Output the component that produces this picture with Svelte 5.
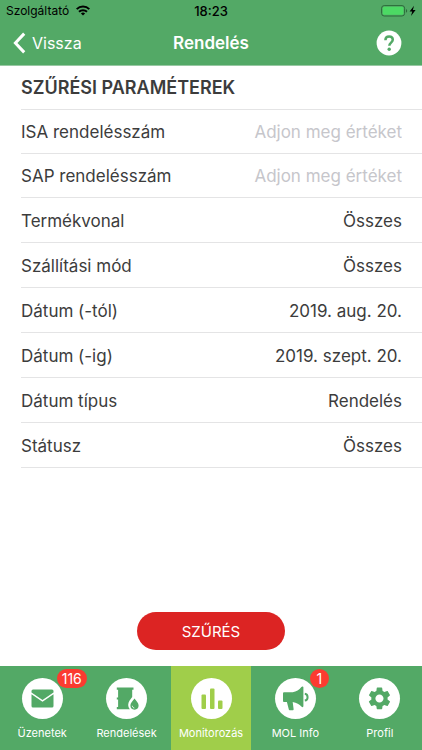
<script>
  const textFields = $state([
    { id: 'isa', label: 'ISA rendelésszám', value: '' },
    { id: 'sap', label: 'SAP rendelésszám', value: '' }
  ]);

  const choices = [
    { id: 'line', label: 'Termékvonal', value: 'Összes', kind: 'select' },
    { id: 'mode', label: 'Szállítási mód', value: 'Összes', kind: 'select' },
    { id: 'from', label: 'Dátum (-tól)', value: '2019. aug. 20.', kind: 'date' },
    { id: 'to', label: 'Dátum (-ig)', value: '2019. szept. 20.', kind: 'date' },
    { id: 'type', label: 'Dátum típus', value: 'Rendelés', kind: 'select' },
    { id: 'status', label: 'Státusz', value: 'Összes', kind: 'select' }
  ];

  const tabs = [
    { icon: 'mail', label: 'Üzenetek', badge: 116 },
    { icon: 'barrel', label: 'Rendelések' },
    { icon: 'chart', label: 'Monitorozás', active: true },
    { icon: 'horn', label: 'MOL Info', badge: 1 },
    { icon: 'gear', label: 'Profil' }
  ];
</script>

<div class="screen">
  <header>
    <div class="status">
      <div class="carrier">
        <span>Szolgáltató</span>
        <svg width="14" height="11" viewBox="0 0 14 11" aria-hidden="true">
          <g fill="none" stroke="#000" stroke-width="2">
            <path d="M.7 4.1a9 9 0 0 1 12.6 0" />
            <path d="M3 6.8a5.7 5.7 0 0 1 8 0" />
          </g>
          <path d="M7 10.6 4.9 8.5a3 3 0 0 1 4.2 0z" />
        </svg>
      </div>
      <span class="clock">18:23</span>
      <div class="power">
        <svg width="36" height="12" viewBox="0 0 36 12" aria-hidden="true">
          <rect x=".6" y=".6" width="23" height="10.4" rx="2.6" fill="none" stroke="#2c6a3b" />
          <rect x="1.8" y="1.8" width="20.6" height="8" rx="1.4" fill="#4cd964" />
          <path d="M25 4c1.6.6 1.6 3.2 0 3.8z" fill="#2c6a3b" />
          <path d="M33 .8 28.6 6.6h2.6l-1.2 4.4 4.6-6h-2.7z" />
        </svg>
      </div>
    </div>
    <nav class="bar">
      <a class="back" href="#back">
        <svg width="13" height="22" viewBox="0 0 13 22" aria-hidden="true">
          <path d="M11.2 1.6 2.4 11l8.800 9.400" fill="none" stroke="#fff" stroke-width="3" />
        </svg>
        Vissza
      </a>
      <h1>Rendelés</h1>
      <button class="help" type="button" aria-label="Súgó">
        <svg width="26" height="26" viewBox="0 0 26 26" aria-hidden="true">
          <circle cx="13" cy="13" r="12.4" fill="#fff" />
          <path d="M9.4 10.2c0-2.3 1.5-3.7 3.700-3.700s3.700 1.400 3.700 3.300c0 2.700-3.500 2.900-3.500 5.900" fill="none" stroke="#53a966" stroke-width="2.5" />
          <circle cx="13.2" cy="19.200" r="1.700" fill="#53a966" />
        </svg>
      </button>
    </nav>
  </header>

  <main>
    <form class="list" onsubmit={(e) => e.preventDefault()}>
      <h2>SZŰRÉSI PARAMÉTEREK</h2>
      {#each textFields as field (field.id)}
        <div class="row text">
          <label for={field.id}>{field.label}</label>
          <input id={field.id} type="text" placeholder="Adjon meg értéket" bind:value={field.value} />
        </div>
      {/each}
      {#each choices as field (field.id)}
        <div class="row">
          <label for={field.id}>{field.label}</label>
          {#if field.kind === 'select'}
            <select id={field.id}><option>{field.value}</option></select>
          {:else}
            <button class="date" id={field.id} type="button">{field.value}</button>
          {/if}
        </div>
      {/each}
      <button class="submit" type="submit">SZŰRÉS</button>
    </form>
  </main>

  <nav class="tabs">
    {#each tabs as tab (tab.label)}
      <a href="#{tab.icon}" class:active={tab.active} aria-current={tab.active ? 'page' : undefined}>
        <span class="disc">
          <svg width="41" height="41" viewBox="0 0 41 41" aria-hidden="true">
            {#if tab.icon === 'mail'}
              <path d="M11 11.500h19a1.500 1.500 0 0 1 1.500 1.500v1.500L20.500 22 9.500 14.500V13a1.500 1.500 0 0 1 1.500-1.500z" />
              <path d="M9.500 16.300l11 7.500 11-7.500V28a1.500 1.500 0 0 1-1.500 1.500H11A1.500 1.500 0 0 1 9.500 28z" />
            {:else if tab.icon === 'barrel'}
              <path d="M10.800 9.600h16.700v2.200h-1.300v7.200c-2 2.600-4 5-4 7.800 0 1.700.6 3.200 1.700 4.400H10.800V29h1.300v-7.400h-1.300v-2.200h1.300v-7.600h-1.300z" />
              <path d="M28.500 20.600c2.200 2.800 4.100 4.600 4.100 7a4.100 4.100 0 0 1-8.200 0c0-2.400 1.900-4.200 4.100-7z" />
              <path d="M26.300 27.800c.1 1.200.9 2 2 2.200" fill="none" stroke="#fff" />
            {:else if tab.icon === 'chart'}
              <rect x="10.500" y="16.500" width="4.500" height="14.500" rx="1" />
              <rect x="19" y="10.500" width="4.500" height="20.500" rx="1" />
              <rect x="27" y="22.500" width="4.500" height="8.500" rx="1" />
            {:else if tab.icon === 'horn'}
              <path d="M9.500 14.300h8.200c3.700-.6 6.500-2.400 8.700-5.200.8-1.100 2-.8 2 .4v18.600c0 1.200-1.100 1.700-2 .5-2-2.400-4.700-4.100-8.700-4.700l.9 7c.1 1-.3 1.400-1.100 1.400h-2.300c-.9 0-1.300-.4-1.500-1.400l-1.800-7h-2.400c-1.200 0-1.500-.4-1.500-1.500v-6.600c0-1.100.4-1.500 1.500-1.500z" />
              <path d="M29.800 15.800c3.700.5 3.700 6.200 0 6.800" fill="none" stroke="#53a966" stroke-width="2" />
            {:else}
              <path transform="translate(6.900 6.900) scale(1.130)" d="M19.140 12.940c.04-.3.06-.61.06-.94 0-.32-.02-.64-.07-.94l2.030-1.580c.18-.14.23-.41.12-.61l-1.920-3.320c-.12-.22-.37-.29-.59-.22l-2.390.96c-.5-.38-1.030-.7-1.620-.94l-.36-2.540c-.04-.24-.24-.41-.48-.41h-3.840c-.24 0-.43.17-.47.41l-.36 2.540c-.59.24-1.130.57-1.620.94l-2.390-.96c-.22-.08-.47 0-.59.22L2.740 8.870c-.12.21-.08.47.12.61l2.030 1.580c-.05.3-.09.63-.09.94s.02.64.07.94l-2.030 1.580c-.18.14-.23.41-.12.61l1.920 3.320c.12.22.37.29.59.22l2.390-.96c.5.38 1.030.7 1.620.94l.36 2.540c.05.24.24.41.48.41h3.840c.24 0 .44-.17.47-.41l.36-2.540c.59-.24 1.130-.56 1.620-.94l2.390.96c.22.08.47 0 .59-.22l1.920-3.320c.12-.22.07-.47-.12-.61l-2.010-1.580zM12 15.600c-1.980 0-3.600-1.620-3.600-3.600s1.620-3.600 3.600-3.600 3.600 1.620 3.600 3.600-1.620 3.600-3.600 3.600z" />
            {/if}
          </svg>
          {#if tab.badge}<span class="badge">{tab.badge}</span>{/if}
        </span>
        <span>{tab.label}</span>
      </a>
    {/each}
  </nav>
</div>

<style>
  :global(body) {
    margin: 0;
    background: #fff;
  }
  .screen {
    display: flex;
    flex-direction: column;
    min-height: 100vh;
    font-family: Inter, "Liberation Sans", sans-serif;
    color: #3c3c3c;
  }
  header {
    background: #53a966;
    border-bottom: 1px solid #98c8a3;
  }
  .status,
  .bar {
    display: grid;
    grid-template-columns: 1fr auto 1fr;
    align-items: center;
  }
  .status {
    height: 21px;
    padding: 0 5px;
    font-size: 12px;
    color: #000;
  }
  .carrier {
    display: flex;
    align-items: center;
    gap: 7px;
    padding-left: 1px;
  }
  .clock {
    font-size: 13px;
    font-weight: 500;
  }
  .power {
    display: flex;
    justify-content: flex-end;
  }
  .bar {
    height: 44px;
    padding: 0 13px;
    color: #fff;
  }
  .back {
    display: flex;
    align-items: center;
    gap: 6px;
    color: #fff;
    font-size: 16px;
    text-decoration: none;
  }
  h1 {
    margin: 0;
    font-size: 17px;
    font-weight: 600;
  }
  button {
    border: 0;
    padding: 0;
    background: none;
    font: inherit;
    color: inherit;
  }
  .help {
    display: flex;
    justify-self: end;
    margin-right: 7px;
  }
  main {
    flex: 1;
    display: flex;
  }
  .list {
    flex: 1;
    min-width: 0;
    display: flex;
    flex-direction: column;
  }
  h2,
  .row {
    box-sizing: border-box;
    height: 45px;
    margin: 0 0 0 21px;
    padding: 1px 20px 0 0;
    border-bottom: 1px solid #e4e4e5;
    font-size: 17px;
  }
  h2 {
    height: 44px;
    font-size: 18px;
    line-height: 42px;
    font-weight: 600;
    white-space: nowrap;
  }
  .row {
    display: flex;
    align-items: center;
    gap: 12px;
  }
  .row.text {
    height: 44px;
  }
  input,
  select,
  .date {
    flex: 1;
    min-width: 0;
    padding: 0;
    border: 0;
    background: none;
    appearance: none;
    font: inherit;
    color: inherit;
    text-align: right;
    text-align-last: right;
  }
  input::placeholder {
    color: #c6c6cb;
    opacity: 1;
  }
  .submit {
    align-self: center;
    width: 148px;
    height: 38px;
    margin: auto 0 16px;
    border-radius: 19px;
    background: #dc2423;
    color: #fff;
    font-size: 15px;
  }
  .tabs {
    display: flex;
    height: 84px;
    background: #53a966;
  }
  .tabs a {
    flex: 1;
    display: flex;
    flex-direction: column;
    align-items: center;
    gap: 7px;
    margin: 0 2px;
    padding-top: 12px;
    color: #fff;
    fill: #53a966;
    font-size: 11px;
    line-height: 14px;
    text-decoration: none;
    white-space: nowrap;
  }
  .tabs a.active {
    background: #a0ce4a;
    fill: #a0ce4a;
  }
  .disc {
    position: relative;
    display: flex;
    border-radius: 50%;
    background: #fff;
  }
  .badge {
    position: absolute;
    left: 35px;
    top: -9px;
    box-sizing: border-box;
    min-width: 19px;
    height: 19px;
    padding: 0 5px;
    border-radius: 10px;
    background: #fb3b30;
    font-size: 14px;
    line-height: 19px;
    text-align: center;
  }
</style>
